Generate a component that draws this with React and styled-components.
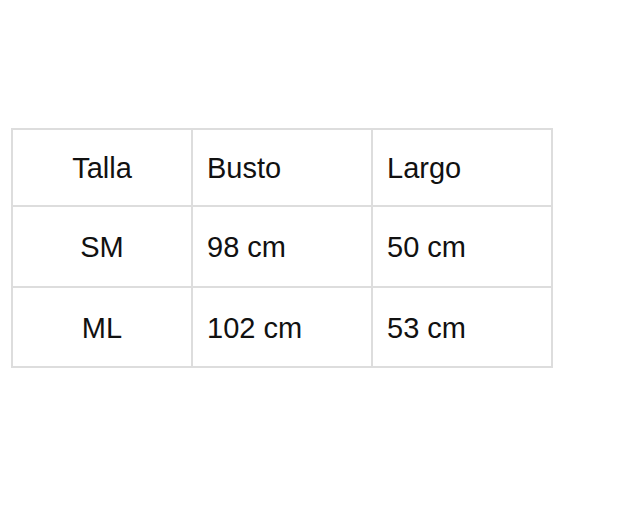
import React from "react";
import styled, { createGlobalStyle } from "styled-components";

const Global = createGlobalStyle`
  html, body { margin: 0; padding: 0; background: #fff; }
  body { font-family: "Liberation Sans", Arial, sans-serif; }
`;

const Page = styled.div`
  padding: 128px 0 0 11px;
`;

const Grid = styled.div`
  display: inline-grid;
  grid-template-columns: repeat(3, 178px);
  grid-template-rows: 75px 79px 78px;
  gap: 2px;
  padding: 2px;
  background: #dddddd;
`;

const Cell = styled.div`
  background: #fff;
  display: flex;
  align-items: center;
  justify-content: ${(p) => (p.$center ? "center" : "flex-start")};
  padding: ${(p) => (p.$center ? "2px 0 0 0" : "2px 0 0 14px")};
  font-size: 29px;
  color: #111;
  line-height: 1;
`;

const rows = [
  ["Talla", "Busto", "Largo"],
  ["SM", "98 cm", "50 cm"],
  ["ML", "102 cm", "53 cm"],
];

export default function App() {
  return (
    <>
      <Global />
      <Page>
        <Grid>
          {rows.map((r, i) =>
            r.map((c, j) => (
              <Cell key={`${i}-${j}`} $center={j === 0}>
                {c}
              </Cell>
            ))
          )}
        </Grid>
      </Page>
    </>
  );
}
